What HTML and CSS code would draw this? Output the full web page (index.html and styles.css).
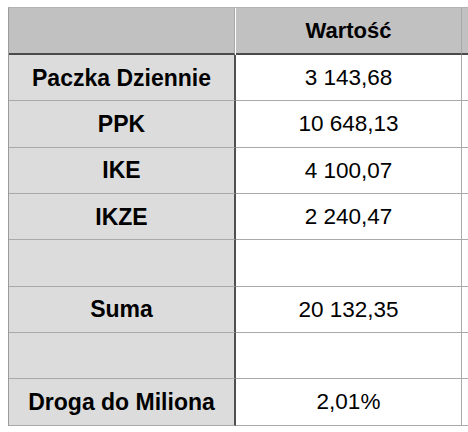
FILE: index.html
```html
<!DOCTYPE html>
<html lang="pl">
<head>
    <meta charset="UTF-8">
    <meta name="viewport" content="width=device-width, initial-scale=1.0">
    <title>Droga do Miliona</title>
    <link rel="stylesheet" href="styles.css">
</head>
<body>

    <div class="sheet">
        <div class="row head-row">
            <div class="cell label-cell"></div>
            <div class="cell value-cell">Wartość</div>
            <div class="cell tail-cell"></div>
        </div>

        <div class="row">
            <div class="cell label-cell">Paczka Dziennie</div>
            <div class="cell value-cell">3 143,68</div>
            <div class="cell tail-cell"></div>
        </div>
        <div class="row">
            <div class="cell label-cell">PPK</div>
            <div class="cell value-cell">10 648,13</div>
            <div class="cell tail-cell"></div>
        </div>
        <div class="row">
            <div class="cell label-cell">IKE</div>
            <div class="cell value-cell">4 100,07</div>
            <div class="cell tail-cell"></div>
        </div>
        <div class="row">
            <div class="cell label-cell">IKZE</div>
            <div class="cell value-cell">2 240,47</div>
            <div class="cell tail-cell"></div>
        </div>
        <div class="row">
            <div class="cell label-cell"></div>
            <div class="cell value-cell"></div>
            <div class="cell tail-cell"></div>
        </div>
        <div class="row">
            <div class="cell label-cell">Suma</div>
            <div class="cell value-cell">20 132,35</div>
            <div class="cell tail-cell"></div>
        </div>
        <div class="row">
            <div class="cell label-cell"></div>
            <div class="cell value-cell"></div>
            <div class="cell tail-cell"></div>
        </div>
        <div class="row">
            <div class="cell label-cell">Droga do Miliona</div>
            <div class="cell value-cell">2,01%</div>
            <div class="cell tail-cell"></div>
        </div>
    </div>

</body>
</html>
```

FILE: styles.css
```css
body {
    font-family: "Liberation Sans", Arial, sans-serif;
    background-color: #fff;
    color: #000;
    margin: 0;
    padding: 0;
    overflow: hidden;
}

.sheet {
    margin: 7px 0 0 8px;
    border-left: 1px solid #9b9b9b;
    border-top: 1px solid #b3b3b3;
}

.row {
    display: flex;
    height: 46.33px;
}

.cell {
    box-sizing: border-box;
    height: 100%;
    display: flex;
    align-items: center;
    justify-content: center;
    font-size: 22.5px;
    padding-top: 1px;
    border-bottom: 1px solid #a9a9a9;
}

.label-cell {
    width: 227px;
    background-color: #dcdcdc;
    font-weight: bold;
    font-size: 23px;
    border-right: 2px solid #4f4f4f;
}

.value-cell {
    width: 226px;
    background-color: #fff;
    border-right: 1px solid #a9a9a9;
}

.tail-cell {
    flex: 1;
    background-color: #fff;
}

/* header row */
.head-row {
    height: 47px;
}

.head-row .cell {
    background-color: #c0c1c0;
    border-bottom: 2px solid #4a4a4a;
    font-weight: bold;
    font-size: 22px;
}

.head-row .label-cell {
    border-right: 1px solid #a8a8a8;
    width: 226px;
    margin-right: 1px;
}

.head-row .value-cell {
    border-right: 1px solid #a8a8a8;
}
```
